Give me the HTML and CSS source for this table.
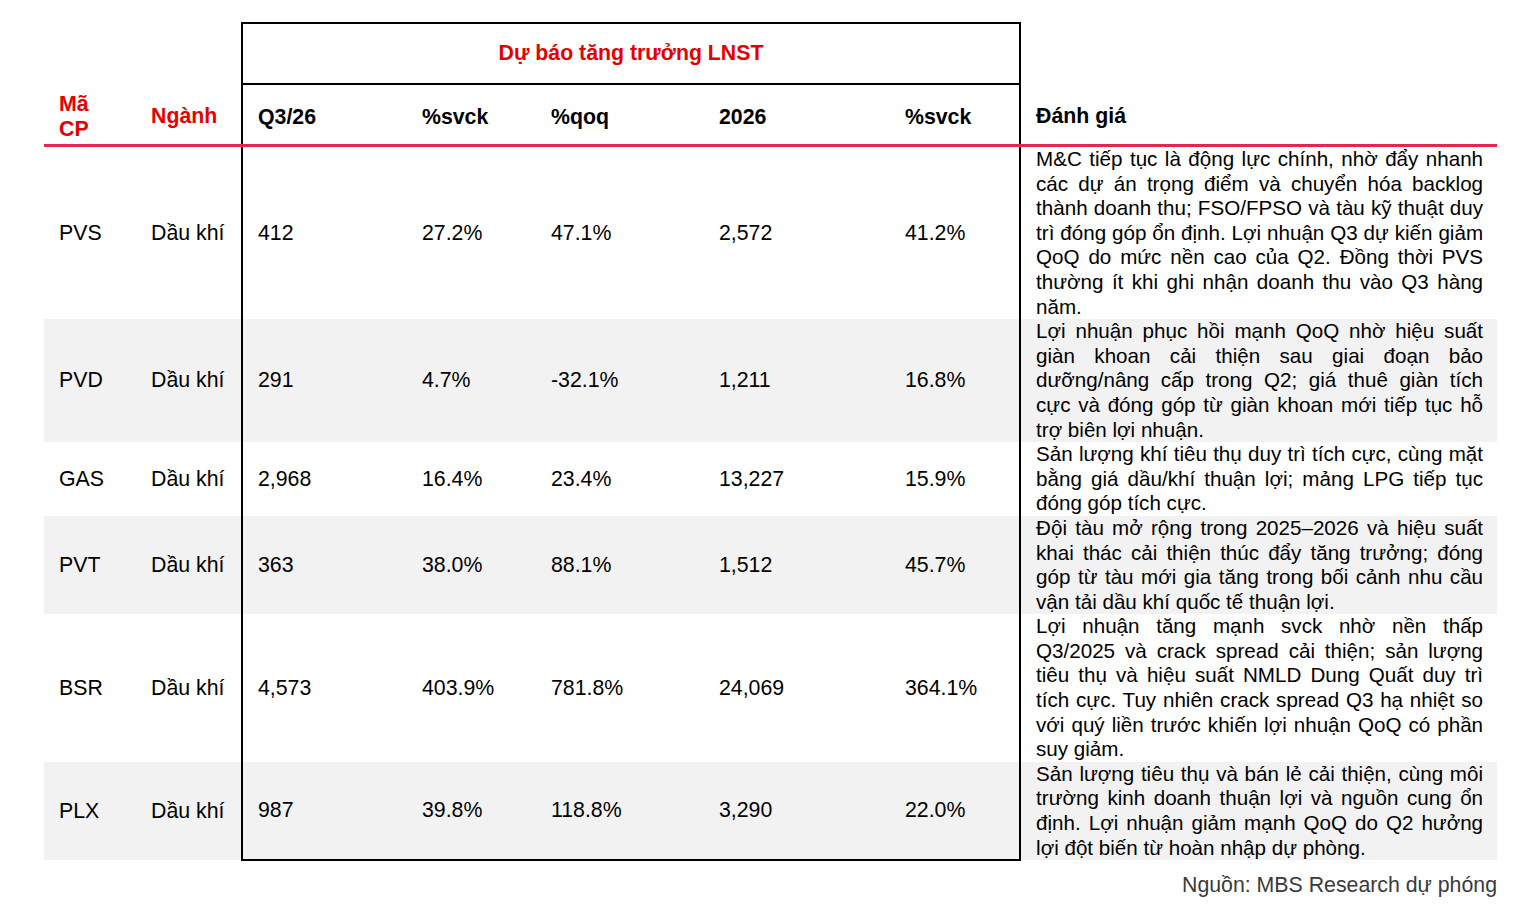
FILE: index.html
```html
<!DOCTYPE html>
<html lang="vi">
<head>
    <meta charset="UTF-8">
    <meta name="viewport" content="width=device-width, initial-scale=1.0">
    <title>Dự báo tăng trưởng LNST</title>
    <link rel="stylesheet" href="styles.css">
</head>
<body>
    <div class="page">
        <table class="forecast">
            <colgroup>
                <col class="c-code">
                <col class="c-sector">
                <col class="c-q3">
                <col class="c-svck">
                <col class="c-qoq">
                <col class="c-year">
                <col class="c-svck2">
                <col class="c-note">
            </colgroup>
            <thead>
                <tr class="head-top">
                    <th colspan="2"></th>
                    <th colspan="5" class="box-title">Dự báo tăng trưởng LNST</th>
                    <th></th>
                </tr>
                <tr class="head-cols">
                    <th class="red">Mã CP</th>
                    <th class="red">Ngành</th>
                    <th class="box-left">Q3/26</th>
                    <th>%svck</th>
                    <th>%qoq</th>
                    <th>2026</th>
                    <th class="box-right">%svck</th>
                    <th>Đánh giá</th>
                </tr>
            </thead>
            <tbody>
                <tr>
                    <td>PVS</td>
                    <td>Dầu khí</td>
                    <td class="box-left">412</td>
                    <td>27.2%</td>
                    <td>47.1%</td>
                    <td>2,572</td>
                    <td class="box-right">41.2%</td>
                    <td class="note">
                        <span class="ln">M&amp;C tiếp tục là động lực chính, nhờ đẩy nhanh</span>
                        <span class="ln">các dự án trọng điểm và chuyển hóa backlog</span>
                        <span class="ln">thành doanh thu; FSO/FPSO và tàu kỹ thuật duy</span>
                        <span class="ln">trì đóng góp ổn định. Lợi nhuận Q3 dự kiến giảm</span>
                        <span class="ln">QoQ do mức nền cao của Q2. Đồng thời PVS</span>
                        <span class="ln">thường ít khi ghi nhận doanh thu vào Q3 hàng</span>
                        <span class="ln">năm.</span>
                    </td>
                </tr>
                <tr class="shade">
                    <td>PVD</td>
                    <td>Dầu khí</td>
                    <td class="box-left">291</td>
                    <td>4.7%</td>
                    <td>-32.1%</td>
                    <td>1,211</td>
                    <td class="box-right">16.8%</td>
                    <td class="note">
                        <span class="ln">Lợi nhuận phục hồi mạnh QoQ nhờ hiệu suất</span>
                        <span class="ln">giàn khoan cải thiện sau giai đoạn bảo</span>
                        <span class="ln">dưỡng/nâng cấp trong Q2; giá thuê giàn tích</span>
                        <span class="ln">cực và đóng góp từ giàn khoan mới tiếp tục hỗ</span>
                        <span class="ln">trợ biên lợi nhuận.</span>
                    </td>
                </tr>
                <tr>
                    <td>GAS</td>
                    <td>Dầu khí</td>
                    <td class="box-left">2,968</td>
                    <td>16.4%</td>
                    <td>23.4%</td>
                    <td>13,227</td>
                    <td class="box-right">15.9%</td>
                    <td class="note">
                        <span class="ln">Sản lượng khí tiêu thụ duy trì tích cực, cùng mặt</span>
                        <span class="ln">bằng giá dầu/khí thuận lợi; mảng LPG tiếp tục</span>
                        <span class="ln">đóng góp tích cực.</span>
                    </td>
                </tr>
                <tr class="shade">
                    <td>PVT</td>
                    <td>Dầu khí</td>
                    <td class="box-left">363</td>
                    <td>38.0%</td>
                    <td>88.1%</td>
                    <td>1,512</td>
                    <td class="box-right">45.7%</td>
                    <td class="note">
                        <span class="ln">Đội tàu mở rộng trong 2025–2026 và hiệu suất</span>
                        <span class="ln">khai thác cải thiện thúc đẩy tăng trưởng; đóng</span>
                        <span class="ln">góp từ tàu mới gia tăng trong bối cảnh nhu cầu</span>
                        <span class="ln">vận tải dầu khí quốc tế thuận lợi.</span>
                    </td>
                </tr>
                <tr>
                    <td>BSR</td>
                    <td>Dầu khí</td>
                    <td class="box-left">4,573</td>
                    <td>403.9%</td>
                    <td>781.8%</td>
                    <td>24,069</td>
                    <td class="box-right">364.1%</td>
                    <td class="note">
                        <span class="ln">Lợi nhuận tăng mạnh svck nhờ nền thấp</span>
                        <span class="ln">Q3/2025 và crack spread cải thiện; sản lượng</span>
                        <span class="ln">tiêu thụ và hiệu suất NMLD Dung Quất duy trì</span>
                        <span class="ln">tích cực. Tuy nhiên crack spread Q3 hạ nhiệt so</span>
                        <span class="ln">với quý liền trước khiến lợi nhuận QoQ có phần</span>
                        <span class="ln">suy giảm.</span>
                    </td>
                </tr>
                <tr class="shade last">
                    <td>PLX</td>
                    <td>Dầu khí</td>
                    <td class="box-left">987</td>
                    <td>39.8%</td>
                    <td>118.8%</td>
                    <td>3,290</td>
                    <td class="box-right">22.0%</td>
                    <td class="note">
                        <span class="ln">Sản lượng tiêu thụ và bán lẻ cải thiện, cùng môi</span>
                        <span class="ln">trường kinh doanh thuận lợi và nguồn cung ổn</span>
                        <span class="ln">định. Lợi nhuận giảm mạnh QoQ do Q2 hưởng</span>
                        <span class="ln">lợi đột biến từ hoàn nhập dự phòng.</span>
                    </td>
                </tr>
            </tbody>
        </table>
        <p class="source">Nguồn: MBS Research dự phóng</p>
    </div>
</body>
</html>
```

FILE: styles.css
```css
body {
    margin: 0;
    background: #fff;
    font-family: "Liberation Sans", Arial, sans-serif;
    color: #000;
}
.page {
    padding: 22px 27px 0 44px;
}
.forecast {
    width: 1453px;
    table-layout: fixed;
    border-collapse: collapse;
    font-size: 21.3px;
    line-height: 24.6px;
}
.c-code { width: 92px; }
.c-sector { width: 106px; }
.c-q3 { width: 165px; }
.c-svck { width: 129px; }
.c-qoq { width: 168px; }
.c-year { width: 186px; }
.c-svck2 { width: 130px; }
.c-note { width: 477px; }
.forecast th, .forecast td {
    padding: 0 15px;
    text-align: left;
    vertical-align: middle;
}
.forecast th {
    font-weight: bold;
}
.head-top th {
    height: 59px;
}
.head-cols th {
    height: 54px;
    padding-top: 5px;
    border-bottom: 3px solid #e4284b;
}
.box-title {
    text-align: center !important;
    color: #e60000;
    border: 2px solid #000;
}
.red {
    color: #e60000;
}
.box-left {
    border-left: 2px solid #000;
}
.box-right {
    border-right: 2px solid #000;
}
.shade {
    background: #f2f2f2;
}
.last .box-left, .last .box-right,
.last td:nth-child(4), .last td:nth-child(5), .last td:nth-child(6) {
    border-bottom: 2px solid #000;
}
.forecast td.note {
    font-size: 20.6px;
    padding: 0 14px 0 15px;
}
/* each line of the comment is justified on its own, the last one is not */
.note .ln {
    display: block;
    white-space: nowrap;
    text-align: justify;
    text-align-last: justify;
}
.note .ln:last-child {
    text-align-last: left;
}
.source {
    margin: 12px 0 0 0;
    text-align: right;
    font-size: 21.3px;
    line-height: 24.6px;
    color: #3a3a3a;
}
```
